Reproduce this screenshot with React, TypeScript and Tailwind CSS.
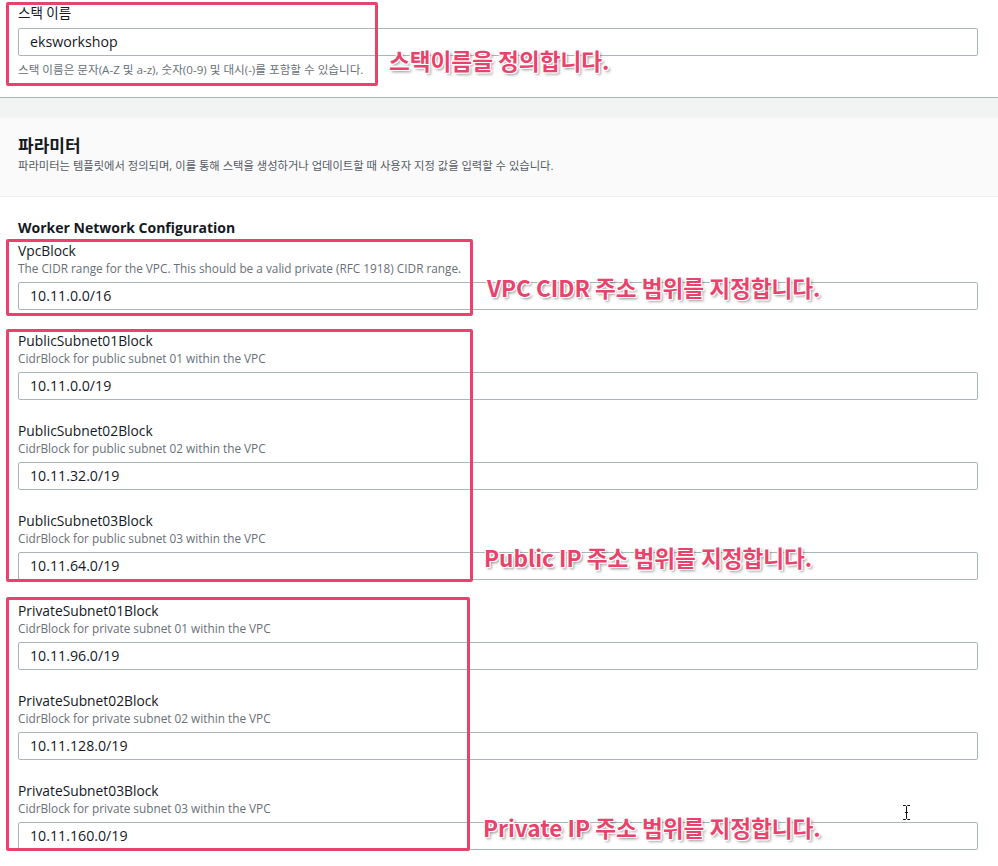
import React from "react";

const fields = [
  { name: "PublicSubnet01Block", desc: "CidrBlock for public subnet 01 within the VPC", value: "10.11.0.0/19" },
  { name: "PublicSubnet02Block", desc: "CidrBlock for public subnet 02 within the VPC", value: "10.11.32.0/19" },
  { name: "PublicSubnet03Block", desc: "CidrBlock for public subnet 03 within the VPC", value: "10.11.64.0/19" },
  { name: "PrivateSubnet01Block", desc: "CidrBlock for private subnet 01 within the VPC", value: "10.11.96.0/19" },
  { name: "PrivateSubnet02Block", desc: "CidrBlock for private subnet 02 within the VPC", value: "10.11.128.0/19" },
  { name: "PrivateSubnet03Block", desc: "CidrBlock for private subnet 03 within the VPC", value: "10.11.160.0/19" },
];

function Field({ name, desc, value }: { name: string; desc: string; value: string }) {
  return (
    <div className="flex flex-col">
      <div className="text-[13.8px] leading-[18px] text-[#16191f]">{name}</div>
      <div className="text-[11.8px] leading-[14px] text-[#687078] mt-[1px]">{desc}</div>
      <div className="mt-[7px] h-[28px] border border-[#aab7b8] rounded-[2px] flex items-center pl-[11px] text-[14.2px] text-[#16191f]">
        {value}
      </div>
    </div>
  );
}

const annot =
  "absolute font-bold text-[22.6px] leading-[28px] text-[#e9426d] whitespace-nowrap [font-family:'Noto_Sans_CJK_KR','Noto_Sans',sans-serif] [text-shadow:1px_0_0_#fff,-1px_0_0_#fff,0_1px_0_#fff,0_-1px_0_#fff,1px_1px_0_#fff,-1px_-1px_0_#fff,1px_-1px_0_#fff,-1px_1px_0_#fff,2px_2px_3px_rgba(0,0,0,0.45)]";

const box = "absolute border-[3px] border-[#e9426d] rounded-[2px]";

export default function App() {
  return (
    <div className="relative w-[998px] h-[866px] overflow-hidden bg-white [font-family:'Open_Sans','Noto_Sans_CJK_KR',sans-serif]">
      {/* Stack name section */}
      <div className="h-[97px] px-[18px] pt-[4px] flex flex-col pr-[20px]">
        <div className="text-[13.5px] leading-[18px] text-[#16191f]">스택 이름</div>
        <div className="mt-[6px] h-[28px] border border-[#aab7b8] rounded-[2px] flex items-center pl-[11px] text-[14.2px] text-[#16191f]">
          eksworkshop
        </div>
        <div className="mt-[7px] text-[11.6px] leading-[14px] text-[#687078]">
          스택 이름은 문자(A-Z 및 a-z), 숫자(0-9) 및 대시(-)를 포함할 수 있습니다.
        </div>
      </div>
      <div className="border-t border-[#aab7b8] h-[21px] bg-[#f2f3f3]" />
      <div className="h-[79px] bg-[#fafafa] border-b border-[#eaeded] px-[18px] flex flex-col pt-[17px]">
        <div className="text-[17px] leading-[22px] font-bold text-[#16191f]">파라미터</div>
        <div className="mt-[2px] text-[11.3px] leading-[14px] text-[#545b64]">
          파라미터는 템플릿에서 정의되며, 이를 통해 스택을 생성하거나 업데이트할 때 사용자 지정 값을 입력할 수 있습니다.
        </div>
      </div>
      <div className="pl-[18px] pr-[20px] pt-[21px] flex flex-col">
        <div className="text-[14px] leading-[20px] font-bold text-[#16191f]">Worker Network Configuration</div>
        <div className="mt-[4px] flex flex-col gap-[22px]">
          <Field name="VpcBlock" desc="The CIDR range for the VPC. This should be a valid private (RFC 1918) CIDR range." value="10.11.0.0/16" />
          {fields.map((f) => (
            <Field key={f.name} {...f} />
          ))}
        </div>
      </div>

      {/* annotation boxes */}
      <div className={`${box} left-[6px] top-[2px] w-[372px] h-[84px]`} />
      <div className={`${box} left-[6px] top-[239px] w-[467px] h-[77px]`} />
      <div className={`${box} left-[6px] top-[329px] w-[467px] h-[253px]`} />
      <div className={`${box} left-[6px] top-[597px] w-[464px] h-[254px]`} />

      <div className={`${annot} left-[389px] top-[47px]`}>스택이름을 정의합니다.</div>
      <div className={`${annot} left-[487px] top-[274px]`}>VPC CIDR 주소 범위를 지정합니다.</div>
      <div className={`${annot} left-[484px] top-[544px]`}>Public IP 주소 범위를 지정합니다.</div>
      <div className={`${annot} left-[483px] top-[814px]`}>Private IP 주소 범위를 지정합니다.</div>

      {/* I-beam cursor */}
      <svg className="absolute left-[902px] top-[804px]" width="9" height="17" viewBox="0 0 9 17">
        <path d="M1 1.5h2.5L4.5 2.5L5.5 1.5H8M4.5 2.5V14.5M1 15.5h2.5L4.5 14.5L5.5 15.5H8M3 8.5h3" stroke="#111" strokeWidth="1" fill="none" />
      </svg>
    </div>
  );
}
